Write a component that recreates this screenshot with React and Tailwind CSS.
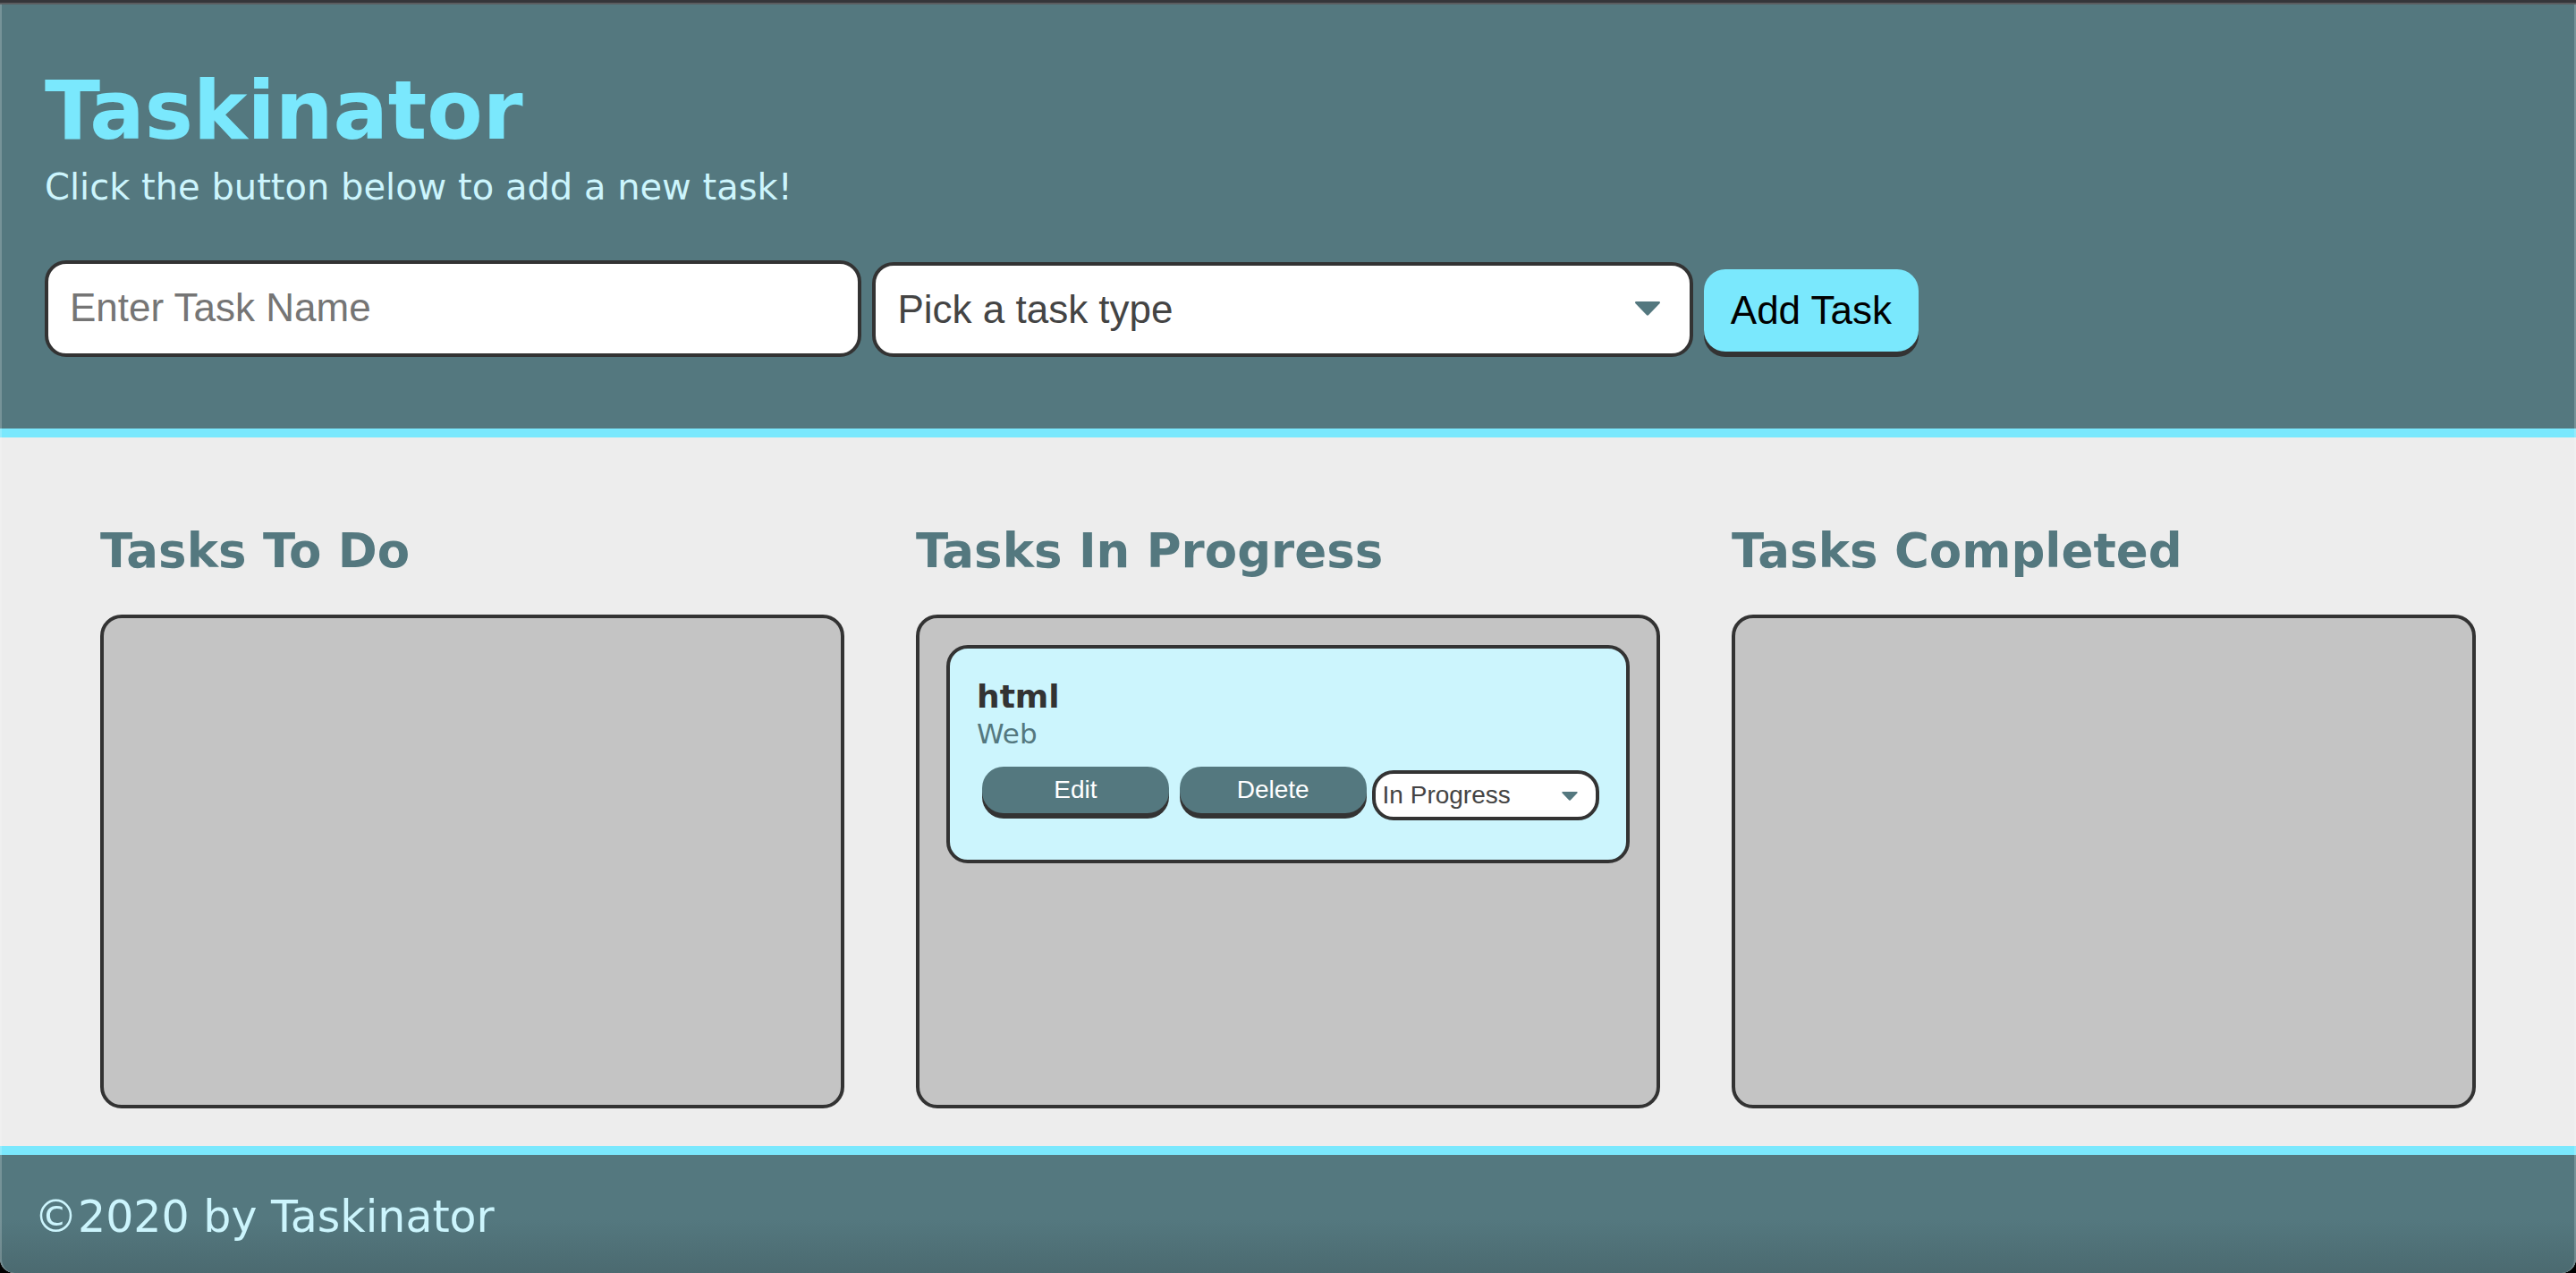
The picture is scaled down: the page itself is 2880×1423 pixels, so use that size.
import React from "react";

function Caret({ className }) {
  return (
    <svg viewBox="0 0 28 16" className={className} aria-hidden="true">
      <path d="M1.5 0H26.5C28 0 28.4 1.3 27.5 2.2L15.2 15.1Q14 16.3 12.8 15.1L0.5 2.2C-0.4 1.3 0 0 1.5 0Z" fill="#54787f" />
    </svg>
  );
}

function TaskForm() {
  return (
    <form className="flex items-end gap-3 font-['Liberation_Sans',Arial,sans-serif] text-[44px] leading-[50px]" onSubmit={(e) => e.preventDefault()}>
      <input
        type="text"
        aria-label="Task name"
        placeholder="Enter Task Name"
        className="h-[108px] w-[calc(33%-4px)] rounded-3xl border-4 border-[#333] bg-white px-6 pb-0.5 text-[#444] placeholder-[#757575] outline-none"
      />
      <div className="relative w-[33%]">
        <select
          aria-label="Task type"
          className="block h-[106px] w-full appearance-none rounded-3xl border-4 border-[#333] bg-white px-6 text-[#444] outline-none"
        >
          <option>Pick a task type</option>
          <option>Print</option>
          <option>Web</option>
          <option>Mobile</option>
        </select>
        <Caret className="pointer-events-none absolute top-11 right-[37px] h-4 w-7" />
      </div>
      <button type="submit" className="mb-[6px] h-[92px] rounded-3xl bg-[#7ae8fd] px-[30px] text-black shadow-[0_6px_0_#333]">
        Add Task
      </button>
    </form>
  );
}

function TaskButton({ children }) {
  return (
    <button
      type="button"
      className="mx-[6px] h-[52px] w-[30%] rounded-3xl bg-[#54787f] text-center text-white shadow-[0_6px_0_#333]"
    >
      {children}
    </button>
  );
}

function TaskCard({ name, type, status }) {
  return (
    <li className="rounded-3xl border-4 border-[#333] bg-[#ccf5fd] px-[30px] pt-8 pb-11">
      <h3 className="text-[36px] leading-[43px] font-bold text-[#333]">{name}</h3>
      <p className="text-[31px] leading-10 text-[#54787f]">{type}</p>
      <div className="mt-[17px] flex items-start font-['Liberation_Sans',Arial,sans-serif] text-[28px] leading-8">
        <TaskButton>Edit</TaskButton>
        <TaskButton>Delete</TaskButton>
        <div className="relative mt-1 flex-1">
          <select
            aria-label="Task status"
            defaultValue={status}
            className="block h-14 w-full appearance-none rounded-3xl border-4 border-[#333] bg-white px-2 text-[#444] outline-none"
          >
            <option>To Do</option>
            <option>In Progress</option>
            <option>Completed</option>
          </select>
          <Caret className="pointer-events-none absolute top-6 right-6 h-[10px] w-[18px]" />
        </div>
      </div>
    </li>
  );
}

function Column({ title, tasks }) {
  return (
    <section className="flex min-w-0 flex-col">
      <h2 className="text-[53px] leading-[66px] font-bold text-[#54787f]">{title}</h2>
      <ul className="mt-[38px] flex-1 rounded-3xl border-4 border-[#333] bg-[#c4c4c4] p-[30px]">
        {tasks.map((task) => (
          <TaskCard key={task.name} {...task} />
        ))}
      </ul>
    </section>
  );
}

export default function App() {
  return (
    <div className="bg-black">
      <div className="relative flex min-h-screen flex-col overflow-hidden rounded-b-2xl bg-[#ededed] font-['DejaVu_Sans',Verdana,sans-serif]">
        <header className="border-b-10 border-[#7ae8fd] bg-[#54787f] px-[50px] pb-20">
          <div className="-mx-[50px] h-[5px] border-b-2 border-[#5b5d60] bg-[#35363a]" />
          <h1 className="pt-[63px] text-[91px] leading-[112px] font-bold text-[#7ae8fd]">Taskinator</h1>
          <p className="mb-[53px] text-[40px] leading-[58px] text-[#ccf5fd]">Click the button below to add a new task!</p>
          <TaskForm />
        </header>
        <main className="grid flex-1 grid-cols-3 gap-20 px-28 pt-[94px] pb-[42px]">
          <Column title="Tasks To Do" tasks={[]} />
          <Column title="Tasks In Progress" tasks={[{ name: "html", type: "Web", status: "In Progress" }]} />
          <Column title="Tasks Completed" tasks={[]} />
        </main>
        <footer className="border-t-10 border-[#7ae8fd] bg-linear-to-b from-[#54787f] from-55% to-[#4b6a70] px-[38px] pt-10 pb-8 text-[49px] leading-[60px] text-[#ccf5fd]">
          ©2020 by Taskinator
        </footer>
        <div className="pointer-events-none absolute inset-x-0 top-[5px] bottom-0 rounded-b-2xl border-x-2 border-white/20" />
      </div>
    </div>
  );
}
